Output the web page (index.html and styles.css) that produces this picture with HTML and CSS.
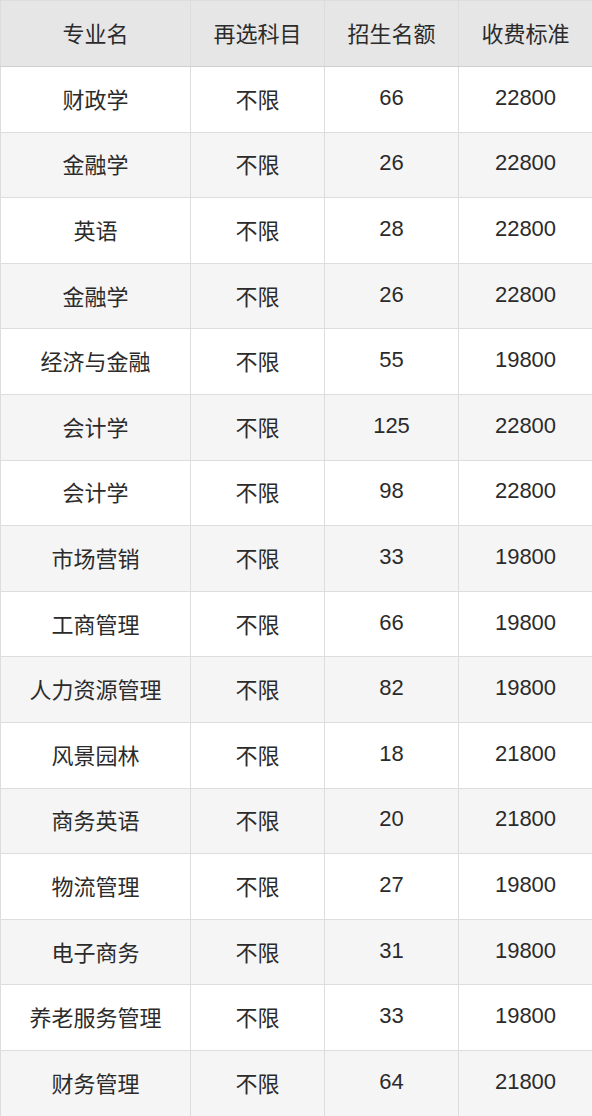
FILE: index.html
```html
<!DOCTYPE html>
<html lang="zh">
<head>
<meta charset="utf-8">
<link rel="stylesheet" href="styles.css">
</head>
<body>
<table class="tbl">
  <colgroup>
    <col class="c1"><col class="c2"><col class="c3"><col class="c4">
  </colgroup>
  <thead>
    <tr><th>专业名</th><th>再选科目</th><th>招生名额</th><th>收费标准</th></tr>
  </thead>
  <tbody>
    <tr><td>财政学</td><td>不限</td><td>66</td><td>22800</td></tr>
    <tr><td>金融学</td><td>不限</td><td>26</td><td>22800</td></tr>
    <tr><td>英语</td><td>不限</td><td>28</td><td>22800</td></tr>
    <tr><td>金融学</td><td>不限</td><td>26</td><td>22800</td></tr>
    <tr><td>经济与金融</td><td>不限</td><td>55</td><td>19800</td></tr>
    <tr><td>会计学</td><td>不限</td><td>125</td><td>22800</td></tr>
    <tr><td>会计学</td><td>不限</td><td>98</td><td>22800</td></tr>
    <tr><td>市场营销</td><td>不限</td><td>33</td><td>19800</td></tr>
    <tr><td>工商管理</td><td>不限</td><td>66</td><td>19800</td></tr>
    <tr><td>人力资源管理</td><td>不限</td><td>82</td><td>19800</td></tr>
    <tr><td>风景园林</td><td>不限</td><td>18</td><td>21800</td></tr>
    <tr><td>商务英语</td><td>不限</td><td>20</td><td>21800</td></tr>
    <tr><td>物流管理</td><td>不限</td><td>27</td><td>19800</td></tr>
    <tr><td>电子商务</td><td>不限</td><td>31</td><td>19800</td></tr>
    <tr><td>养老服务管理</td><td>不限</td><td>33</td><td>19800</td></tr>
    <tr><td>财务管理</td><td>不限</td><td>64</td><td>21800</td></tr>
  </tbody>
</table>
</body>
</html>
```
FILE: styles.css
```css
html, body {
  margin: 0;
  padding: 0;
  background: #ffffff;
}
.tbl {
  width: 592px;
  border-collapse: collapse;
  table-layout: fixed;
  font-family: "Liberation Sans", "Noto Sans CJK SC", sans-serif;
  font-size: 22px;
  color: #2b2b2b;
}
.c1 { width: 190px; }
.c2 { width: 134px; }
.c3 { width: 134px; }
.c4 { width: 134px; }
.tbl th, .tbl td {
  border: 1px solid #dddddd;
  text-align: center;
  vertical-align: middle;
  padding: 0 0 3px 0;
  font-weight: normal;
}
.tbl thead tr {
  height: 66px;
  background: #e6e6e6;
}
.tbl thead th {
  border-bottom: 1px solid #cfcfcf;
}
.tbl tbody tr {
  height: 65.6px;
}
.tbl tbody tr:nth-child(even) {
  background: #f5f5f5;
}
```
